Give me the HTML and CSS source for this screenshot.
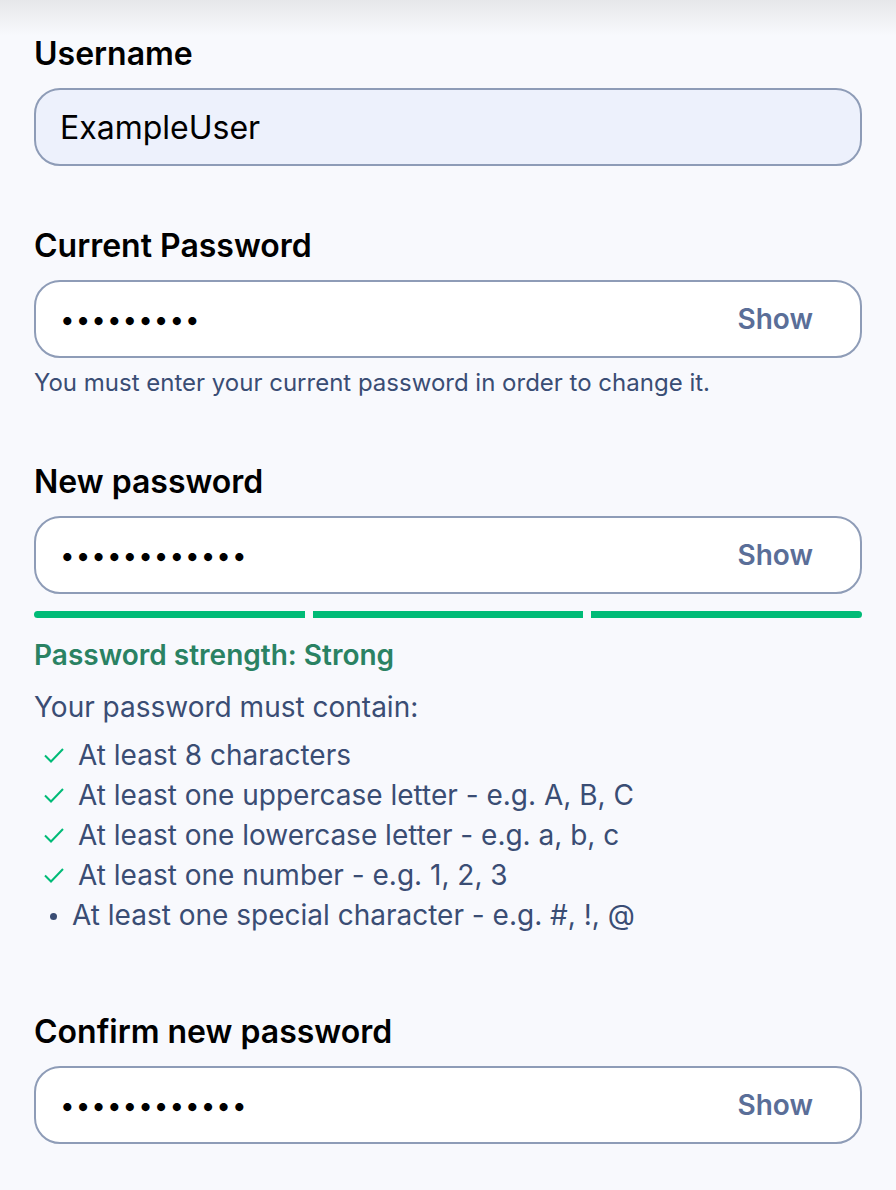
FILE: index.html
```html
<!DOCTYPE html>
<html lang="en">

<head>
    <meta charset="UTF-8">
    <meta name="viewport" content="width=device-width, initial-scale=1.0">
    <title>Change password</title>
    <link rel="stylesheet" href="styles.css">
</head>

<body>
    <div class="top-shade"></div>

    <form class="account-form">
        <div class="field">
            <label class="field-label">Username</label>
            <div class="input-box input-filled">
                <span class="input-text">ExampleUser</span>
            </div>
        </div>

        <div class="field field-current">
            <label class="field-label">Current Password</label>
            <div class="input-box">
                <span class="input-dots">•••••••••</span>
                <span class="show-btn">Show</span>
            </div>
            <div class="hint">You must enter your current password in order to change it.</div>
        </div>

        <div class="field field-new">
            <label class="field-label">New password</label>
            <div class="input-box">
                <span class="input-dots">••••••••••••</span>
                <span class="show-btn">Show</span>
            </div>
            <div class="strength-bars">
                <span class="bar"></span>
                <span class="bar"></span>
                <span class="bar"></span>
            </div>
            <div class="strength-label">Password strength: Strong</div>
            <div class="rules-title">Your password must contain:</div>
            <ul class="rules">
                <li class="rule done">
                    <svg class="check" viewBox="0 0 24 24" width="24" height="24"><path d="M3 12.5l6 6L21 6" /></svg>
                    At least 8 characters
                </li>
                <li class="rule done">
                    <svg class="check" viewBox="0 0 24 24" width="24" height="24"><path d="M3 12.5l6 6L21 6" /></svg>
                    At least one uppercase letter - e.g. A, B, C
                </li>
                <li class="rule done">
                    <svg class="check" viewBox="0 0 24 24" width="24" height="24"><path d="M3 12.5l6 6L21 6" /></svg>
                    At least one lowercase letter - e.g. a, b, c
                </li>
                <li class="rule done">
                    <svg class="check" viewBox="0 0 24 24" width="24" height="24"><path d="M3 12.5l6 6L21 6" /></svg>
                    At least one number - e.g. 1, 2, 3
                </li>
                <li class="rule todo">
                    <span class="dot"></span>
                    At least one special character - e.g. #, !, @
                </li>
            </ul>
        </div>

        <div class="field field-confirm">
            <label class="field-label">Confirm new password</label>
            <div class="input-box">
                <span class="input-dots">••••••••••••</span>
                <span class="show-btn">Show</span>
            </div>
        </div>
    </form>
</body>

</html>
```

FILE: styles.css
```css
* {
    box-sizing: border-box;
}

body {
    font-family: Inter, "Noto Sans", sans-serif;
    background-color: #f8f9fd;
    color: #000;
    margin: 0;
    padding: 0;
}

.top-shade {
    height: 36px;
    margin-bottom: -36px;
    background: linear-gradient(#e6e7ea, rgba(248, 249, 253, 0));
}

.account-form {
    padding: 36px 34px 40px;
}

.field-label {
    display: block;
    font-size: 32px;
    font-weight: 600;
    line-height: 36px;
    margin-bottom: 16px;
}

.input-box {
    display: flex;
    align-items: center;
    justify-content: space-between;
    height: 78px;
    padding: 0 47px 0 24px;
    background-color: #fff;
    border: 2px solid #8e9cb7;
    border-radius: 26px;
}

.input-filled {
    background-color: #edf1fc;
}

.input-text {
    font-size: 32px;
    color: #000;
}

.input-dots {
    font-size: 26px;
    letter-spacing: 1px;
    color: #000;
}

.show-btn {
    font-size: 28px;
    font-weight: 600;
    color: #5a6e98;
}

.field-current {
    margin-top: 62px;
}

.hint {
    margin-top: 11px;
    font-size: 24px;
    line-height: 28px;
    color: #3a4d74;
}

.field-new {
    margin-top: 67px;
}

.strength-bars {
    display: flex;
    gap: 8px;
    margin-top: 17px;
    border-radius: 4px;
    overflow: hidden;
}

.bar {
    flex: 1;
    height: 7px;
    background-color: #00bb77;
}

.strength-label {
    margin-top: 22px;
    font-size: 28px;
    font-weight: 600;
    line-height: 30px;
    color: #2a8263;
}

.rules-title {
    margin-top: 22px;
    font-size: 28px;
    line-height: 30px;
    color: #3a4d74;
}

.rules {
    list-style: none;
    margin: 13px 0 0;
    padding: 0;
}

.rule {
    display: flex;
    align-items: center;
    height: 40px;
    font-size: 28px;
    color: #3a4d74;
}

.check {
    margin: 0 12px 0 8px;
    fill: none;
    stroke: #00bb77;
    stroke-width: 2;
}

.dot {
    width: 7px;
    height: 7px;
    margin: 2px 15px 0 16px;
    border-radius: 50%;
    background-color: #3a4d74;
}

.field-confirm {
    margin-top: 79px;
}
```
